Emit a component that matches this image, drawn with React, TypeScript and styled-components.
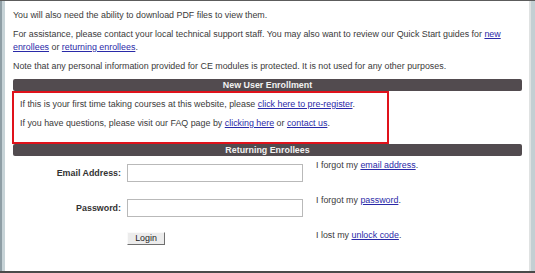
import React from "react";
import styled, { createGlobalStyle } from "styled-components";

const Global = createGlobalStyle`
  html, body { margin: 0; padding: 0; background: #fff; }
  body { font-family: "Liberation Sans", Arial, sans-serif; }
`;

const Frame = styled.div`
  width: 535px;
  height: 273px;
  box-sizing: border-box;
  border-top: 1px solid #5c5c5c;
  border-bottom: 2px solid #4a4a4a;
  display: flex;
  background: #fff;
  overflow: hidden;
`;

const Rail = styled.div<{ $side: "left" | "right" }>`
  flex: none;
  width: ${(p) => (p.$side === "left" ? "5px" : "6px")};
  background: ${(p) =>
    p.$side === "left"
      ? "linear-gradient(to right, #8f9ea5 0 2px, #c7d3d7 2px)"
      : "linear-gradient(to right, #dfe2e2 0 2px, #c3cfd3 2px)"};
`;

const Content = styled.div`
  flex: 1;
  padding: 8px 7px 0 8px;
  font-size: 8.9px;
  line-height: 13px;
  color: #3a3a3a;
`;

const Para = styled.p`
  margin: 0 0 6px;
`;

const Link = styled.a`
  color: #2a2aa8;
  text-decoration: underline;
`;

const Bar = styled.div<{ $top?: number }>`
  margin-top: ${(p) => p.$top ?? 0}px;
  height: 12px;
  border-radius: 2px;
  background: #524b4f;
  color: #f2f2f2;
  font-weight: bold;
  font-size: 8.9px;
  line-height: 12px;
  text-align: center;
`;

const Highlight = styled.div`
  margin-left: -1px;
  width: 377px;
  height: 53px;
  box-sizing: border-box;
  border: 2px solid #e0121b;
  padding: 5px 6px 0;
`;

const Form = styled.div`
  margin-top: 3px;
  display: grid;
  grid-template-columns: 108px 176px 1fr;
  grid-auto-rows: 35px;
  column-gap: 6px;
`;

const Label = styled.label`
  margin-top: 5px;
  height: 18px;
  display: flex;
  align-items: center;
  justify-content: flex-end;
  font-weight: bold;
  color: #333;
`;

const Field = styled.input`
  margin-top: 5px;
  width: 176px;
  height: 18px;
  box-sizing: border-box;
  border: 1px solid #b9b9b9;
  padding: 0 3px;
  font: inherit;
  outline: none;
`;

const ButtonCell = styled.div`
  grid-column: 2;
  padding-top: 3px;
`;

const Button = styled.button`
  width: 38px;
  height: 13px;
  padding: 0;
  box-sizing: border-box;
  background: #ececec;
  border: 1px solid;
  border-color: #fafafa #6f6f6f #6f6f6f #fafafa;
  font-family: "Liberation Sans", Arial, sans-serif;
  font-size: 8.9px;
  line-height: 11px;
  color: #222;
`;

const Help = styled.div<{ $col?: number }>`
  grid-column: 3;
  padding-left: 7px;
`;

export default function App() {
  return (
    <>
      <Global />
      <Frame>
        <Rail $side="left" />
        <Content>
          <Para>You will also need the ability to download PDF files to view them.</Para>
          <Para>
            For assistance, please contact your local technical support staff. You may also want to review our Quick
            Start guides for <Link href="#">new enrollees</Link> or <Link href="#">returning enrollees</Link>.
          </Para>
          <Para>Note that any personal information provided for CE modules is protected. It is not used for any other purposes.</Para>
          <Bar $top={2}>New User Enrollment</Bar>
          <Highlight>
            <Para>
              If this is your first time taking courses at this website, please{" "}
              <Link href="#">click here to pre-register</Link>.
            </Para>
            <Para>
              If you have questions, please visit our FAQ page by <Link href="#">clicking here</Link> or{" "}
              <Link href="#">contact us</Link>.
            </Para>
          </Highlight>
          <Bar>Returning Enrollees</Bar>
          <Form>
            <Label htmlFor="email">Email Address:</Label>
            <Field id="email" type="text" />
            <Help>
              I forgot my <Link href="#">email address</Link>.
            </Help>
            <Label htmlFor="pw">Password:</Label>
            <Field id="pw" type="password" />
            <Help>
              I forgot my <Link href="#">password</Link>.
            </Help>
            <ButtonCell>
              <Button type="button">Login</Button>
            </ButtonCell>
            <Help>
              I lost my <Link href="#">unlock code</Link>.
            </Help>
          </Form>
        </Content>
        <Rail $side="right" />
      </Frame>
    </>
  );
}
